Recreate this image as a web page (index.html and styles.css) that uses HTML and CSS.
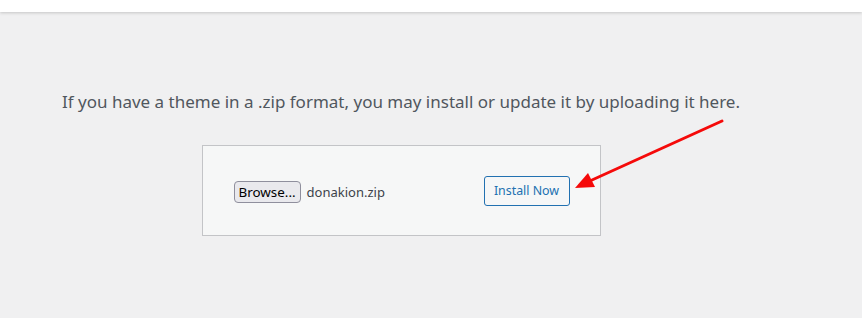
FILE: index.html
```html
<!DOCTYPE html>
<html>
<head>
<meta charset="utf-8">
<link rel="stylesheet" href="styles.css">
</head>
<body>
<div class="topbar"></div>
<main class="wrap">
  <p class="help">If you have a theme in a .zip format, you may install or update it by uploading it here.</p>
  <form class="upload">
    <div class="file">
      <span class="browse">Browse...</span>
      <span class="fname">donakion.zip</span>
    </div>
    <span class="install">Install Now</span>
  </form>
</main>
<svg class="arrow" width="862" height="318" viewBox="0 0 862 318">
  <line x1="722" y1="121" x2="592" y2="180" stroke="#f50a0a" stroke-width="3" stroke-linecap="round"/>
  <polygon points="575,188 588,173 595,187" fill="#f50a0a"/>
</svg>
</body>
</html>
```
FILE: styles.css
```css
html, body { margin: 0; padding: 0; }
body {
  background: #f0f0f1;
  width: 862px;
  height: 318px;
  overflow: hidden;
  position: relative;
  font-family: "Noto Sans", "Open Sans", sans-serif;
}
.topbar {
  height: 12px;
  background: #fff;
  box-shadow: 0 1px 3px rgba(0,0,0,0.18);
}
.wrap {
  width: 802px;
  display: flex;
  flex-direction: column;
  align-items: center;
}
.help {
  margin: 79px 0 0;
  color: #50575e;
  font-size: 17px;
  line-height: 22px;
  white-space: nowrap;
}
.upload {
  margin-top: 32px;
  box-sizing: border-box;
  width: 399px;
  height: 91px;
  border: 1px solid #c3c4c7;
  background: #f6f7f7;
  display: flex;
  align-items: center;
  justify-content: space-between;
  padding: 0 30px 0 31px;
}
.file { display: flex; align-items: center; gap: 6px; margin-top: 2px; }
.browse {
  box-sizing: border-box;
  height: 22px;
  padding: 0 4px;
  border: 1px solid #8f8f9d;
  border-radius: 4px;
  background: #e9e9ed;
  color: #000;
  font-size: 13.4px;
  line-height: 20px;
}
.fname { color: #3c434a; font-size: 13px; }
.install {
  box-sizing: border-box;
  height: 30px;
  width: 86px;
  border: 1px solid #2271b1;
  border-radius: 3px;
  color: #2271b1;
  font-size: 12.4px;
  line-height: 28px;
  text-align: center;
  background: #f6f7f7;
}
.arrow { position: absolute; left: 0; top: 0; pointer-events: none; }
```
